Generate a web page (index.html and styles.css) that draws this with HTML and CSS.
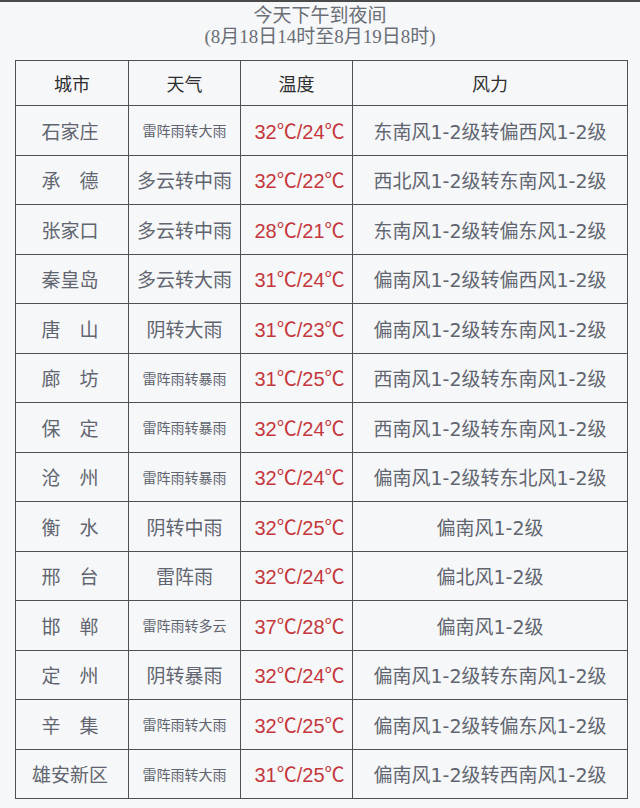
FILE: index.html
```html
<!DOCTYPE html>
<html lang="zh-CN">
<head>
<meta charset="utf-8">
<title>今天下午到夜间</title>
<link rel="stylesheet" href="styles.css">
</head>
<body>
<div class="page">
  <header class="title">
    <div class="title-line">今天下午到夜间</div>
    <div class="title-line">(8月18日14时至8月19日8时)</div>
  </header>
  <div class="grid">
    <div class="cell head">城市</div>
    <div class="cell head">天气</div>
    <div class="cell head">温度</div>
    <div class="cell head">风力</div>

    <div class="cell city">石家庄</div>
    <div class="cell wx small">雷阵雨转大雨</div>
    <div class="cell temp">32℃/24℃</div>
    <div class="cell wind">东南风1-2级转偏西风1-2级</div>

    <div class="cell city">承　德</div>
    <div class="cell wx">多云转中雨</div>
    <div class="cell temp">32℃/22℃</div>
    <div class="cell wind">西北风1-2级转东南风1-2级</div>

    <div class="cell city">张家口</div>
    <div class="cell wx">多云转中雨</div>
    <div class="cell temp">28℃/21℃</div>
    <div class="cell wind">东南风1-2级转偏东风1-2级</div>

    <div class="cell city">秦皇岛</div>
    <div class="cell wx">多云转大雨</div>
    <div class="cell temp">31℃/24℃</div>
    <div class="cell wind">偏南风1-2级转偏西风1-2级</div>

    <div class="cell city">唐　山</div>
    <div class="cell wx">阴转大雨</div>
    <div class="cell temp">31℃/23℃</div>
    <div class="cell wind">偏南风1-2级转东南风1-2级</div>

    <div class="cell city">廊　坊</div>
    <div class="cell wx small">雷阵雨转暴雨</div>
    <div class="cell temp">31℃/25℃</div>
    <div class="cell wind">西南风1-2级转东南风1-2级</div>

    <div class="cell city">保　定</div>
    <div class="cell wx small">雷阵雨转暴雨</div>
    <div class="cell temp">32℃/24℃</div>
    <div class="cell wind">西南风1-2级转东南风1-2级</div>

    <div class="cell city">沧　州</div>
    <div class="cell wx small">雷阵雨转暴雨</div>
    <div class="cell temp">32℃/24℃</div>
    <div class="cell wind">偏南风1-2级转东北风1-2级</div>

    <div class="cell city">衡　水</div>
    <div class="cell wx">阴转中雨</div>
    <div class="cell temp">32℃/25℃</div>
    <div class="cell wind">偏南风1-2级</div>

    <div class="cell city">邢　台</div>
    <div class="cell wx">雷阵雨</div>
    <div class="cell temp">32℃/24℃</div>
    <div class="cell wind">偏北风1-2级</div>

    <div class="cell city">邯　郸</div>
    <div class="cell wx small">雷阵雨转多云</div>
    <div class="cell temp">37℃/28℃</div>
    <div class="cell wind">偏南风1-2级</div>

    <div class="cell city">定　州</div>
    <div class="cell wx">阴转暴雨</div>
    <div class="cell temp">32℃/24℃</div>
    <div class="cell wind">偏南风1-2级转东南风1-2级</div>

    <div class="cell city">辛　集</div>
    <div class="cell wx small">雷阵雨转大雨</div>
    <div class="cell temp">32℃/25℃</div>
    <div class="cell wind">偏南风1-2级转偏东风1-2级</div>

    <div class="cell city">雄安新区</div>
    <div class="cell wx small">雷阵雨转大雨</div>
    <div class="cell temp">31℃/25℃</div>
    <div class="cell wind">偏南风1-2级转西南风1-2级</div>
  </div>
</div>
</body>
</html>
```

FILE: styles.css
```css
html, body {
  margin: 0;
  padding: 0;
}
body {
  background: #f6f7f9;
  border-top: 2px solid #4a4a4a;
  font-family: "Liberation Serif", "Noto Sans CJK SC", serif;
  color: #61656f;
}
.page {
  padding: 3px 0 0 0;
}
.title {
  text-align: center;
  color: #6a6e76;
  font-size: 19px;
  line-height: 21px;
  margin-bottom: 13px;
}
.grid {
  margin-left: 15px;
  width: 612px;
  display: grid;
  grid-template-columns: 113px 112px 112px 275px;
  grid-template-rows: 45px repeat(14, 49.5px);
  border-left: 1px solid #505050;
  border-top: 1px solid #505050;
}
.cell {
  display: flex;
  align-items: center;
  justify-content: center;
  border-right: 1px solid #505050;
  border-bottom: 1px solid #505050;
  font-size: 19px;
  white-space: nowrap;
}
.head {
  color: #2e2e2e;
  font-size: 18px;
}
.city {
  padding-right: 4px;
}
.wx.small {
  font-size: 14px;
}
.temp {
  color: #c4373c;
  font-family: "Liberation Sans", "Noto Sans CJK SC", sans-serif;
  font-size: 20px;
  padding-left: 6px;
}
.wind {
  font-family: "DejaVu Sans", "Noto Sans CJK SC", sans-serif;
  font-size: 19px;
}
```
